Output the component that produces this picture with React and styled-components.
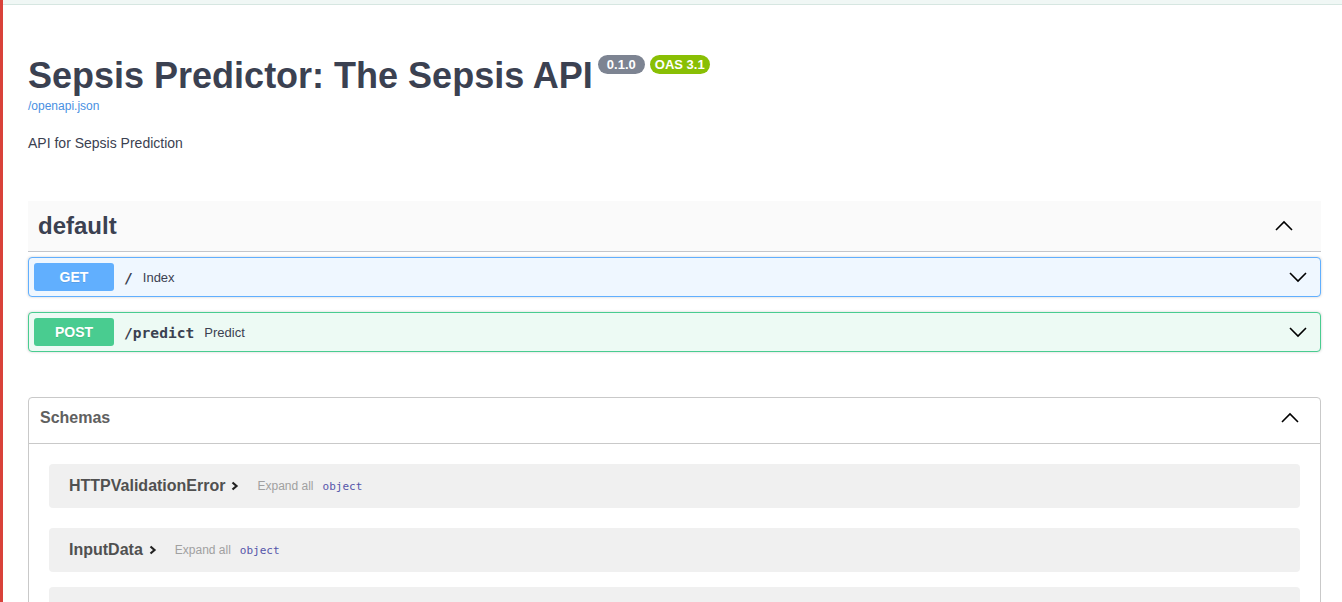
import React from "react";
import styled, { createGlobalStyle } from "styled-components";

const GlobalStyle = createGlobalStyle`
  html, body {
    margin: 0;
    padding: 0;
    background: #fff;
    overflow: hidden;
  }
  body {
    font-family: "Liberation Sans", Arial, sans-serif;
    color: #3b4151;
  }
`;

const Page = styled.div`
  display: flex;
  min-height: 602px;
`;

const RedRail = styled.div`
  width: 3px;
  flex-shrink: 0;
  background: #d9413a;
`;

const Main = styled.div`
  flex: 1;
  min-width: 0;
`;

const TopStrip = styled.div`
  height: 4px;
  background: #f0f7f5;
  border-bottom: 1px solid #d6e6e1;
`;

const Content = styled.div`
  padding: 0 21px 0 25px;
`;

const Info = styled.div`
  margin: 50px 0 0;
`;

const TitleRow = styled.div`
  display: flex;
  align-items: flex-start;
  gap: 5px;
`;

const Title = styled.h2`
  margin: 0;
  font-size: 36px;
  line-height: 41px;
  font-weight: 700;
  color: #3b4151;
`;

const Badge = styled.span`
  display: inline-block;
  height: 19px;
  line-height: 19px;
  padding: 0 ${(p) => p.$pad}px;
  border-radius: 57px;
  background: ${(p) => p.$bg};
  color: #fff;
  font-size: 13px;
  font-weight: 700;
`;

const SpecLink = styled.a`
  display: block;
  margin-top: 3px;
  font-size: 12px;
  line-height: 14px;
  color: #4990e2;
  text-decoration: none;
`;

const Description = styled.p`
  margin: 22px 0 0;
  font-size: 14px;
  line-height: 16px;
  color: #3b4151;
`;

const TagSection = styled.div`
  margin-top: 50px;
  padding-bottom: 15px;
`;

const TagHeader = styled.div`
  display: flex;
  align-items: center;
  justify-content: space-between;
  height: 50px;
  padding: 0 27px 0 10px;
  background: #fafafa;
  border-bottom: 1px solid #c4c6cb;
  margin-bottom: 5px;
`;

const TagName = styled.h3`
  margin: 0;
  font-size: 24px;
  font-weight: 700;
  color: #3b4151;
`;

const Opblock = styled.div`
  display: flex;
  align-items: center;
  height: 38px;
  padding: 0 12px 0 5px;
  border: 1px solid ${(p) => p.$color};
  border-radius: 4px;
  background: ${(p) => p.$bg};
  box-shadow: 0 0 3px rgba(0, 0, 0, 0.19);

  & + & {
    margin-top: 15px;
  }
`;

const Method = styled.span`
  width: 80px;
  height: 28px;
  line-height: 28px;
  text-align: center;
  border-radius: 3px;
  background: ${(p) => p.$color};
  color: #fff;
  font-size: 14px;
  font-weight: 700;
  text-shadow: 0 1px 0 rgba(0, 0, 0, 0.1);
`;

const Path = styled.span`
  padding: 0 10px;
  font-family: "DejaVu Sans Mono", "Liberation Mono", monospace;
  font-size: 14.6px;
  font-weight: 700;
  color: #3b4151;
`;

const Summary = styled.span`
  flex: 1;
  font-size: 13px;
  color: #3b4151;
`;

const Models = styled.section`
  margin-top: 30px;
  border: 1px solid #c9c9c9;
  border-radius: 4px;
`;

const ModelsHeader = styled.div`
  display: flex;
  align-items: center;
  justify-content: space-between;
  height: 39px;
  padding: 0 20px 6px 11px;
  border-bottom: 1px solid #c9c9c9;
`;

const ModelsTitle = styled.h4`
  margin: 0;
  font-size: 16px;
  font-weight: 700;
  color: #606060;
`;

const ModelList = styled.div`
  padding-top: 20px;
`;

const ModelRow = styled.div`
  display: flex;
  align-items: center;
  height: 44px;
  margin: 0 20px ${(p) => (p.$first ? 20 : 15)}px;
  padding: 0 20px;
  border-radius: 4px;
  background: #f0f0f0;
`;

const ModelName = styled.span`
  font-size: 16px;
  font-weight: 700;
  color: #505050;
`;

const ModelToggle = styled.span`
  display: inline-flex;
  margin: 0 18px 0 6px;
`;

const ExpandAll = styled.span`
  font-size: 12px;
  color: #a0a0a0;
  margin-right: 9px;
`;

const TypeLabel = styled.span`
  font-family: "DejaVu Sans Mono", "Liberation Mono", monospace;
  font-size: 11px;
  color: #55a;
`;

const Chevron = ({ up, size = 20 }) => (
  <svg width={size} height={size} viewBox="0 0 20 20" aria-hidden="true">
    <path
      d={up ? "M2 14 L10 6 L18 14" : "M2 6 L10 14 L18 6"}
      fill="none"
      stroke="#000"
      strokeWidth="1.6"
    />
  </svg>
);

const SmallArrow = () => (
  <svg width="8" height="10" viewBox="0 0 8 10" aria-hidden="true">
    <path d="M1.5 1.5 L5.5 5 L1.5 8.5" fill="none" stroke="#222" strokeWidth="2.2" />
  </svg>
);

const ops = [
  { method: "GET", path: "/", summary: "Index", color: "#61affe", bg: "#eff7ff" },
  { method: "POST", path: "/predict", summary: "Predict", color: "#49cc90", bg: "#edfaf4" },
];

// the third schema only shows its top edge inside the frame
const schemas = ["HTTPValidationError", "InputData", null];

export default function App() {
  return (
    <>
      <GlobalStyle />
      <Page>
        <RedRail />
        <Main>
          <TopStrip />
          <Content>
            <Info>
              <TitleRow>
                <Title>Sepsis Predictor: The Sepsis API</Title>
                <Badge $bg="#7d8492" $pad={9}>0.1.0</Badge>
                <Badge $bg="#89bf04" $pad={5}>OAS 3.1</Badge>
              </TitleRow>
              <SpecLink href="#">/openapi.json</SpecLink>
              <Description>API for Sepsis Prediction</Description>
            </Info>

            <TagSection>
              <TagHeader>
                <TagName>default</TagName>
                <Chevron up />
              </TagHeader>
              {ops.map((op) => (
                <Opblock key={op.path} $color={op.color} $bg={op.bg}>
                  <Method $color={op.color}>{op.method}</Method>
                  <Path>{op.path}</Path>
                  <Summary>{op.summary}</Summary>
                  <Chevron />
                </Opblock>
              ))}
            </TagSection>

            <Models>
              <ModelsHeader>
                <ModelsTitle>Schemas</ModelsTitle>
                <Chevron up />
              </ModelsHeader>
              <ModelList>
                {schemas.map((name, i) => (
                  <ModelRow key={i} $first={i === 0}>
                    {name && (
                      <>
                        <ModelName>{name}</ModelName>
                        <ModelToggle>
                          <SmallArrow />
                        </ModelToggle>
                        <ExpandAll>Expand all</ExpandAll>
                        <TypeLabel>object</TypeLabel>
                      </>
                    )}
                  </ModelRow>
                ))}
              </ModelList>
            </Models>
          </Content>
        </Main>
      </Page>
    </>
  );
}
